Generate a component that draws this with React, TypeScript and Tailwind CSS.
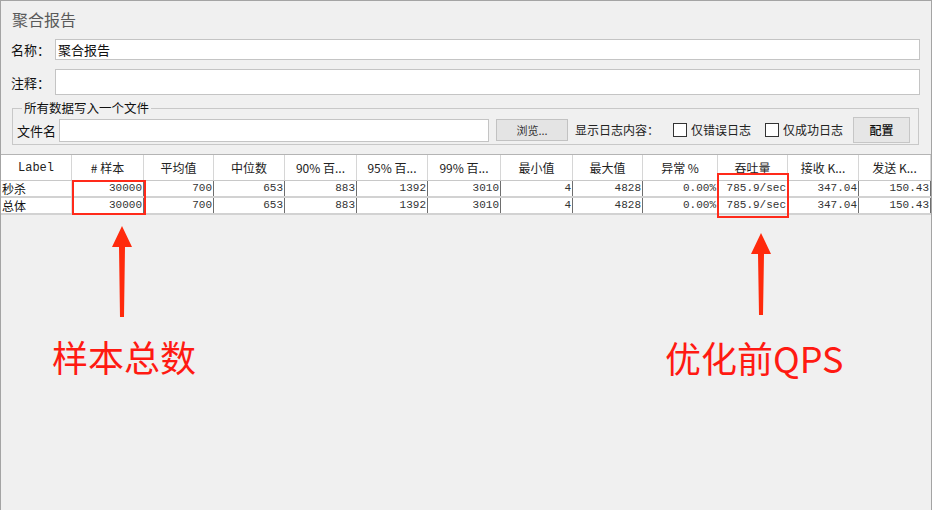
import React from "react";

const headers = [
  "Label",
  "# 样本",
  "平均值",
  "中位数",
  "90% 百...",
  "95% 百...",
  "99% 百...",
  "最小值",
  "最大值",
  "异常 %",
  "吞吐量",
  "接收 K...",
  "发送 K...",
];

const rows = [
  ["秒杀", "30000", "700", "653", "883", "1392", "3010", "4", "4828", "0.00%", "785.9/sec", "347.04", "150.43"],
  ["总体", "30000", "700", "653", "883", "1392", "3010", "4", "4828", "0.00%", "785.9/sec", "347.04", "150.43"],
];

const cjk = { fontFamily: '"Noto Sans CJK SC", "Noto Sans", sans-serif' };
const mono = { fontFamily: '"Liberation Mono", "Noto Sans CJK SC", monospace' };

function Arrow({ height }: { height: number }) {
  // red annotation arrow, tip at the top
  return (
    <svg width="24" height={height} viewBox={`0 0 24 ${height}`} className="block">
      <polygon
        points={`12,0 22,21 15,21 14,${height} 10,${height} 9,21 2,21`}
        fill="#ff2a0c"
      />
    </svg>
  );
}

function Checkbox() {
  return <span className="inline-block w-[14px] h-[14px] bg-white border border-[#333]" />;
}

export default function App() {
  return (
    <div
      className="w-[932px] h-[510px] bg-[#f0f0f0] border-l border-r border-t border-[#a4a4a4] overflow-hidden text-[#111]"
      style={cjk}
    >
      {/* Title */}
      <div className="h-[36px] pl-[11px] pt-[8px] text-[16px] leading-[20px] text-[#5a5a5a]">聚合报告</div>

      {/* Name */}
      <div className="flex items-center h-[21px] mt-[2px] pl-[10px] pr-[11px]">
        <span className="w-[44px] text-[13px] leading-none">名称：</span>
        <div className="flex-1 h-full bg-white border border-[#c4c4c4] flex items-center pl-[2px] text-[13px]">
          聚合报告
        </div>
      </div>

      {/* Comment */}
      <div className="flex items-center h-[26px] mt-[9px] pl-[10px] pr-[11px]">
        <span className="w-[44px] text-[13px] leading-none">注释：</span>
        <div className="flex-1 h-full bg-white border border-[#c4c4c4]" />
      </div>

      {/* File group */}
      <fieldset className="mt-[6px] ml-[11px] w-[907px] border border-[#c8c8c8] px-[4px] pb-[1px]">
        <legend className="ml-[5px] px-[2px] text-[12.5px] leading-[14px]">所有数据写入一个文件</legend>
        <div className="flex items-center h-[26px] mt-[2px]">
          <span className="w-[42px] text-[13px] leading-none">文件名</span>
          <div className="w-[430px] h-[23px] bg-white border border-[#c4c4c4]" />
          <div className="ml-[7px] w-[72px] h-[22px] bg-[#e4e4e4] border border-[#c2c2c2] flex items-center justify-center text-[11px] text-[#333]">
            浏览...
          </div>
          <span className="ml-[7px] text-[12px] text-[#222]">显示日志内容：</span>
          <span className="ml-[14px] flex items-center"><Checkbox /></span>
          <span className="ml-[4px] text-[12px] text-[#222]">仅错误日志</span>
          <span className="ml-[14px] flex items-center"><Checkbox /></span>
          <span className="ml-[4px] text-[12px] text-[#222]">仅成功日志</span>
          <div className="ml-[10px] w-[57px] h-[26px] bg-[#e6e6e6] border border-[#c6c6c6] flex items-center justify-center text-[12px] font-medium">
            配置
          </div>
        </div>
      </fieldset>

      {/* Table */}
      <div className="relative mt-[9px] w-[930px] border-t border-[#b4b4b4] bg-white">
        <div className="grid grid-cols-[71px_72px_70px_71px_72px_71px_73px_72px_70px_75px_70px_71px_72px] h-[26px] border-b border-[#c8c8c8]">
          {headers.map((h, i) => (
            <div
              key={i}
              className="flex items-center justify-center border-r border-[#d6d6d6] text-[12px] text-[#222] whitespace-nowrap"
              style={i === 0 ? mono : cjk}
            >
              {h}
            </div>
          ))}
        </div>
        {rows.map((r, ri) => (
          <div
            key={ri}
            className="grid grid-cols-[71px_72px_70px_71px_72px_71px_73px_72px_70px_75px_70px_71px_72px] h-[17px] border-b-2 border-[#d2d2d2]"
          >
            {r.map((c, ci) =>
              ci === 0 ? (
                <div key={ci} className="flex items-center pl-[1px] text-[12px] leading-none border-r border-[#e0e0e0]" style={cjk}>
                  {c}
                </div>
              ) : (
                <div
                  key={ci}
                  className="flex items-center justify-end pr-[1px] text-[11px] leading-none text-[#333] border-r border-[#6e6e6e] whitespace-nowrap"
                  style={mono}
                >
                  {c}
                </div>
              )
            )}
          </div>
        ))}

        {/* red highlight boxes */}
        <div className="absolute left-[71px] top-[25px] w-[74px] h-[35px] border-2 border-[#ff2a1a]" />
        <div className="absolute left-[716px] top-[18px] w-[72px] h-[45px] border-2 border-[#ff2a1a]" />
      </div>

      {/* Annotations */}
      <div className="flex">
        <div className="w-[600px]">
          <div className="ml-[109px] mt-[11px]">
            <Arrow height={91} />
          </div>
          <div className="ml-[51px] mt-[21px] text-[36px] leading-none text-[#ff1a12]" style={cjk}>
            样本总数
          </div>
        </div>
        <div>
          <div className="ml-[148px] mt-[18px]">
            <Arrow height={82} />
          </div>
          <div className="ml-[64px] mt-[24px] text-[36px] leading-none text-[#ff1a12]" style={cjk}>
            优化前QPS
          </div>
        </div>
      </div>
    </div>
  );
}
